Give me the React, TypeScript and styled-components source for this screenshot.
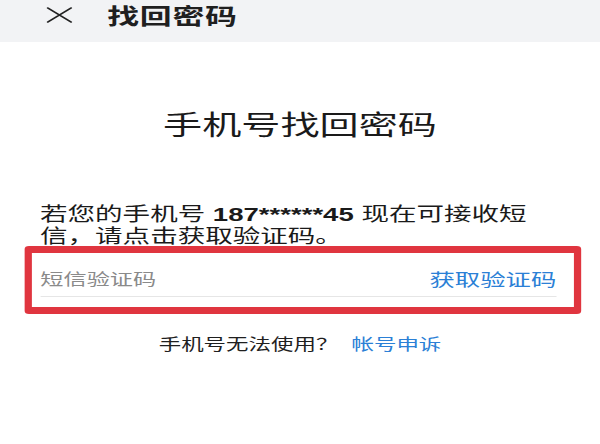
import React from "react";
import styled, { createGlobalStyle } from "styled-components";

const Global = createGlobalStyle`
  html, body { margin: 0; padding: 0; background: #fff; overflow: hidden; }
  body { font-family: "Liberation Sans", "Noto Sans CJK SC", sans-serif; }
`;

/* The reference is a 414px-wide phone screen shown stretched to 600px. */
const Page = styled.div`
  width: 414px;
  height: 444px;
  background: #fff;
  overflow: hidden;
  display: flex;
  flex-direction: column;
  transform: scaleX(1.4493);
  transform-origin: 0 0;
`;

const Header = styled.header`
  flex: none;
  height: 42px;
  background: #f2f3f5;
  display: flex;
  align-items: flex-start;
  padding-left: 32px;
  box-sizing: border-box;
`;

const CloseIcon = styled.svg`
  width: 18px;
  height: 16px;
  margin-top: 7px;
  flex: none;
`;

const HeaderTitle = styled.h1`
  margin: 1px 0 0 24px;
  font-size: 22px;
  line-height: 32px;
  font-weight: 700;
  color: #1f1f1f;
  letter-spacing: 0.5px;
`;

const Body = styled.main`
  display: flex;
  flex-direction: column;
`;

const Heading = styled.h2`
  margin: 64px 0 0;
  text-align: center;
  font-size: 27px;
  line-height: 40px;
  font-weight: 400;
  color: #1a1a1a;
`;

const Intro = styled.p`
  margin: 58px 0 -2px 27.6px;
  font-size: 19px;
  line-height: 22px;
  color: #1a1a1a;
`;

const Phone = styled.b`
  font-weight: 700;
`;

const Highlight = styled.div`
  margin: 0 12.6px 0 17.2px;
  height: 68px;
  border-style: solid;
  border-color: #e0353f;
  border-width: 7px 5px;
  border-radius: 3px;
  box-sizing: border-box;
  padding: 0 12.6px 0 5.6px;
  display: flex;
  flex-direction: column;
`;

const Field = styled.div`
  flex: none;
  height: 44px;
  box-sizing: border-box;
  padding-top: 7px;
  display: flex;
  align-items: center;
  justify-content: space-between;
  border-bottom: 1px solid #e6e6e6;
`;

const Placeholder = styled.span`
  font-size: 16px;
  color: #8a8a8a;
`;

const LinkText = styled.span<{ $size?: number }>`
  font-size: ${(p) => p.$size ?? 15.5}px;
  color: #2b80d6;
`;

const Footer = styled.div`
  margin-top: 19.5px;
  display: flex;
  justify-content: center;
  gap: 9px;
  font-size: 15.5px;
  line-height: 22px;
`;

const Muted = styled.span`
  color: #1f1f1f;
`;

export default function App() {
  return (
    <>
      <Global />
      <Page>
        <Header>
          <CloseIcon viewBox="0 0 18 16" fill="none">
            <path d="M1 1 L17 15 M17 1 L1 15" stroke="#222" strokeWidth="1.6" strokeLinecap="round" />
          </CloseIcon>
          <HeaderTitle>找回密码</HeaderTitle>
        </Header>
        <Body>
          <Heading>手机号找回密码</Heading>
          <Intro>
            若您的手机号 <Phone>187******45</Phone> 现在可接收短
            <br />
            信，请点击获取验证码。
          </Intro>
          <Highlight>
            <Field>
              <Placeholder>短信验证码</Placeholder>
              <LinkText $size={17.5}>获取验证码</LinkText>
            </Field>
          </Highlight>
          <Footer>
            <Muted>手机号无法使用？</Muted>
            <LinkText>帐号申诉</LinkText>
          </Footer>
        </Body>
      </Page>
    </>
  );
}
